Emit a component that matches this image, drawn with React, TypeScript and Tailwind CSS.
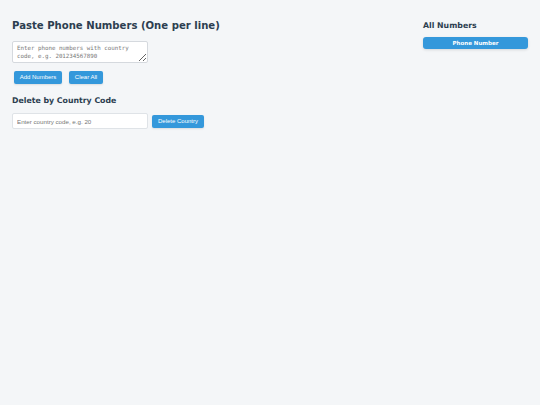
export default function App() {
  return (
    <div className="min-h-screen bg-[#f4f6f8] text-[#2c3e50]" style={{ fontFamily: '"DejaVu Sans", Verdana, sans-serif' }}>
      <div className="flex justify-between px-3 pt-[18px]">
        {/* Left column */}
        <div className="w-[300px]">
          <h2 className="text-[10.1px] leading-[16px] font-bold">Paste Phone Numbers (One per line)</h2>
          <textarea
            className="mt-[7px] block w-[136px] h-[22px] bg-white border border-[#d5d9de] rounded-[2px] px-[4px] py-[2px] text-[5.8px] leading-[8px] placeholder-[#777777] [font-family:'DejaVu_Sans_Mono',monospace]"
            placeholder="Enter phone numbers with country code, e.g. 201234567890"
          />
          <div className="mt-[8px] ml-[2px] flex gap-[7px] [font-family:'Liberation_Sans',Arial,sans-serif]">
            <button className="h-[13px] w-[48px] rounded-[2px] bg-[#3498db] text-white text-[6px] shadow-[0_1px_2px_rgba(0,0,0,0.1)]">
              Add Numbers
            </button>
            <button className="h-[13px] w-[34px] rounded-[2px] bg-[#3498db] text-white text-[6px] shadow-[0_1px_2px_rgba(0,0,0,0.1)]">
              Clear All
            </button>
          </div>
          <h3 className="mt-[11px] text-[7.8px] leading-[12px] font-bold">Delete by Country Code</h3>
          <div className="mt-[6px] flex items-center gap-[4px] [font-family:'Liberation_Sans',Arial,sans-serif]">
            <input
              className="w-[136px] h-[16px] bg-white border border-[#dfe3e7] rounded-[2px] px-[4px] text-[6.2px] placeholder-[#777777]"
              placeholder="Enter country code, e.g. 20"
            />
            <button className="h-[13px] w-[52px] rounded-[2px] bg-[#3498db] text-white text-[6px] shadow-[0_1px_2px_rgba(0,0,0,0.1)]">
              Delete Country
            </button>
          </div>
        </div>

        {/* Right column */}
        <div className="w-[105px] pt-[2px]">
          <h3 className="text-[7.8px] leading-[12px] font-bold">All Numbers</h3>
          <div className="mt-[5px] h-[12px] rounded-[3px] bg-[#3498db] text-white text-[5.5px] font-bold flex items-center justify-center shadow-[0_1px_3px_rgba(0,0,0,0.12)]">
            Phone Number
          </div>
        </div>
      </div>
    </div>
  );
}
